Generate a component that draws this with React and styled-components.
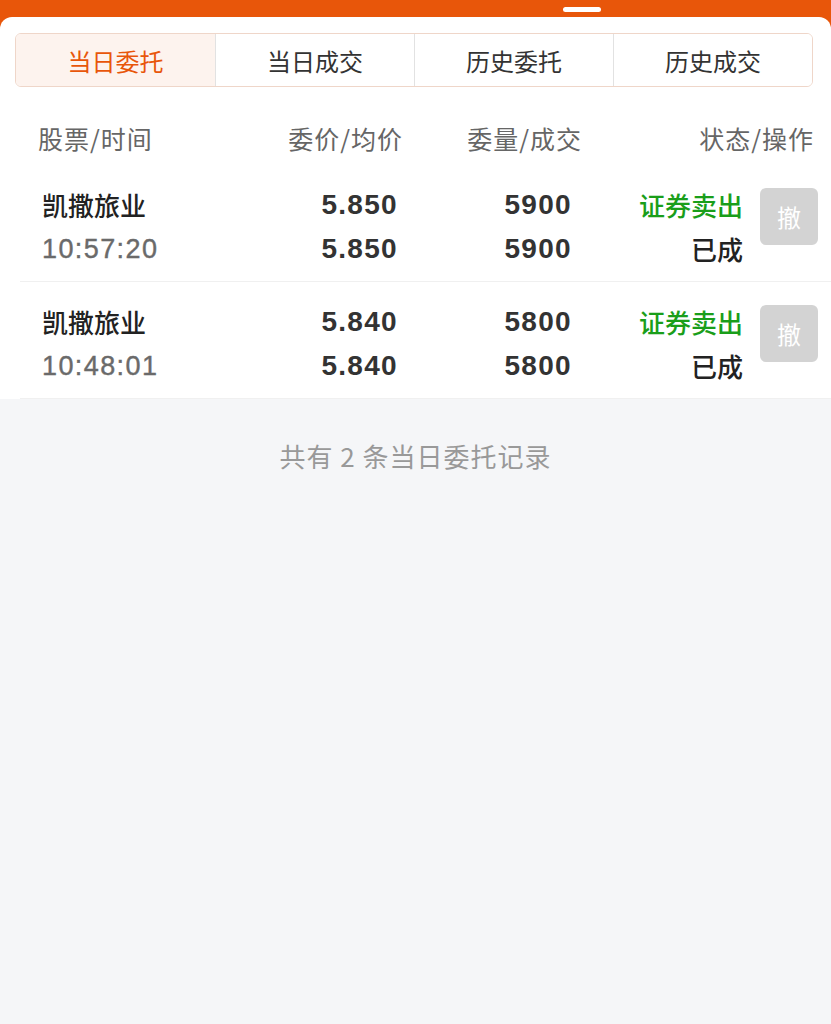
import React from 'react'
import styled, { createGlobalStyle } from 'styled-components'

const GlobalStyle = createGlobalStyle`
  html, body {
    margin: 0;
    padding: 0;
    background: #f5f6f8;
  }
  body {
    font-family: "Noto Sans CJK SC", "Liberation Sans", sans-serif;
  }
`

const tabs = ['当日委托', '当日成交', '历史委托', '历史成交']

const orders = [
  { name: '凯撒旅业', time: '10:57:20', price: '5.850', avg: '5.850', qty: '5900', done: '5900', side: '证券卖出', status: '已成' },
  { name: '凯撒旅业', time: '10:48:01', price: '5.840', avg: '5.840', qty: '5800', done: '5800', side: '证券卖出', status: '已成' },
]

const App = () => {
  const active = 0

  return (
    <Page>
      <GlobalStyle />
      <TopBar>
        <Pill />
      </TopBar>
      <Card>
        <TabBar>
          {tabs.map((t, i) => (
            <Tab key={t} $active={i === active}>{t}</Tab>
          ))}
        </TabBar>

        <HeadRow>
          <HeadCell $left>股票/时间</HeadCell>
          <HeadCell>委价/均价</HeadCell>
          <HeadCell>委量/成交</HeadCell>
          <HeadCell>状态/操作</HeadCell>
        </HeadRow>

        {orders.map((o, i) => (
          <Row key={i}>
            <Cell $left>
              <Name>{o.name}</Name>
              <Time>{o.time}</Time>
            </Cell>
            <Cell>
              <Num>{o.price}</Num>
              <Num>{o.avg}</Num>
            </Cell>
            <Cell>
              <Num>{o.qty}</Num>
              <Num>{o.done}</Num>
            </Cell>
            <Cell>
              <Side>{o.side}</Side>
              <Status>{o.status}</Status>
            </Cell>
            <CancelBtn>撤</CancelBtn>
          </Row>
        ))}
      </Card>
      <Footer>共有 2 条当日委托记录</Footer>
    </Page>
  )
}

const Page = styled.div`
  min-height: 1024px;
  background: linear-gradient(#e8560a 0, #e8560a 40px, #f5f6f8 40px);
`

const TopBar = styled.div`
  height: 17px;
  display: flex;
  align-items: flex-start;
  padding-left: 563px;
  box-sizing: border-box;
`

const Pill = styled.div`
  margin-top: 7px;
  width: 38px;
  height: 5px;
  border-radius: 3px;
  background: #ffffff;
`

const Card = styled.div`
  background: #ffffff;
  border-radius: 12px 12px 0 0;
  padding-top: 16px;
`

const TabBar = styled.div`
  margin: 0 18px 0 15px;
  height: 54px;
  display: grid;
  grid-template-columns: repeat(4, 1fr);
  border: 1px solid #efd6c9;
  border-radius: 6px;
  overflow: hidden;
  box-sizing: border-box;
`

const Tab = styled.div`
  display: flex;
  align-items: center;
  justify-content: center;
  font-size: 24px;
  color: ${p => (p.$active ? '#e8560a' : '#333333')};
  background: ${p => (p.$active ? '#fdf3ee' : '#ffffff')};
  & + & {
    border-left: 1px solid #e2e2e2;
  }
`

const HeadRow = styled.div`
  display: grid;
  grid-template-columns: 194px 170px 179px 1fr;
  padding: 36px 18px 12px 38px;
  line-height: 30px;
`

const HeadCell = styled.div`
  font-size: 25px;
  letter-spacing: 1px;
  margin-right: -1px;
  color: #666666;
  text-align: ${p => (p.$left ? 'left' : 'right')};
`

const Row = styled.div`
  display: grid;
  grid-template-columns: 188px 168px 174px 171px 58px;
  margin-left: 20px;
  padding: 18px 13px 10px 22px;
  border-bottom: 1px solid #f0f0f0;
  line-height: 44px;
`

const Cell = styled.div`
  display: flex;
  flex-direction: column;
  align-items: ${p => (p.$left ? 'flex-start' : 'flex-end')};
`

const Name = styled.div`
  font-size: 26px;
  font-weight: 500;
  color: #222222;
`

const Time = styled.div`
  font-family: "Liberation Sans", sans-serif;
  font-size: 27px;
  letter-spacing: 1.4px;
  color: #6a6a6a;
  -webkit-text-stroke: 0.4px #6a6a6a;
`

const Num = styled.div`
  font-family: "Liberation Sans", sans-serif;
  font-size: 28px;
  font-weight: 700;
  letter-spacing: 1.3px;
  color: #333333;
`

const Side = styled.div`
  font-size: 26px;
  font-weight: 500;
  color: #1a9e1a;
`

const Status = styled.div`
  font-size: 26px;
  font-weight: 500;
  color: #222222;
`

const CancelBtn = styled.div`
  margin-left: 17px;
  margin-top: 5px;
  width: 58px;
  height: 57px;
  border-radius: 6px;
  background: #d3d3d3;
  color: #ffffff;
  font-size: 24px;
  display: flex;
  align-items: center;
  justify-content: center;
  line-height: 1;
`

const Footer = styled.div`
  padding-top: 42px;
  line-height: 30px;
  text-align: center;
  font-size: 26px;
  letter-spacing: 1px;
  color: #999999;
`

export default App
